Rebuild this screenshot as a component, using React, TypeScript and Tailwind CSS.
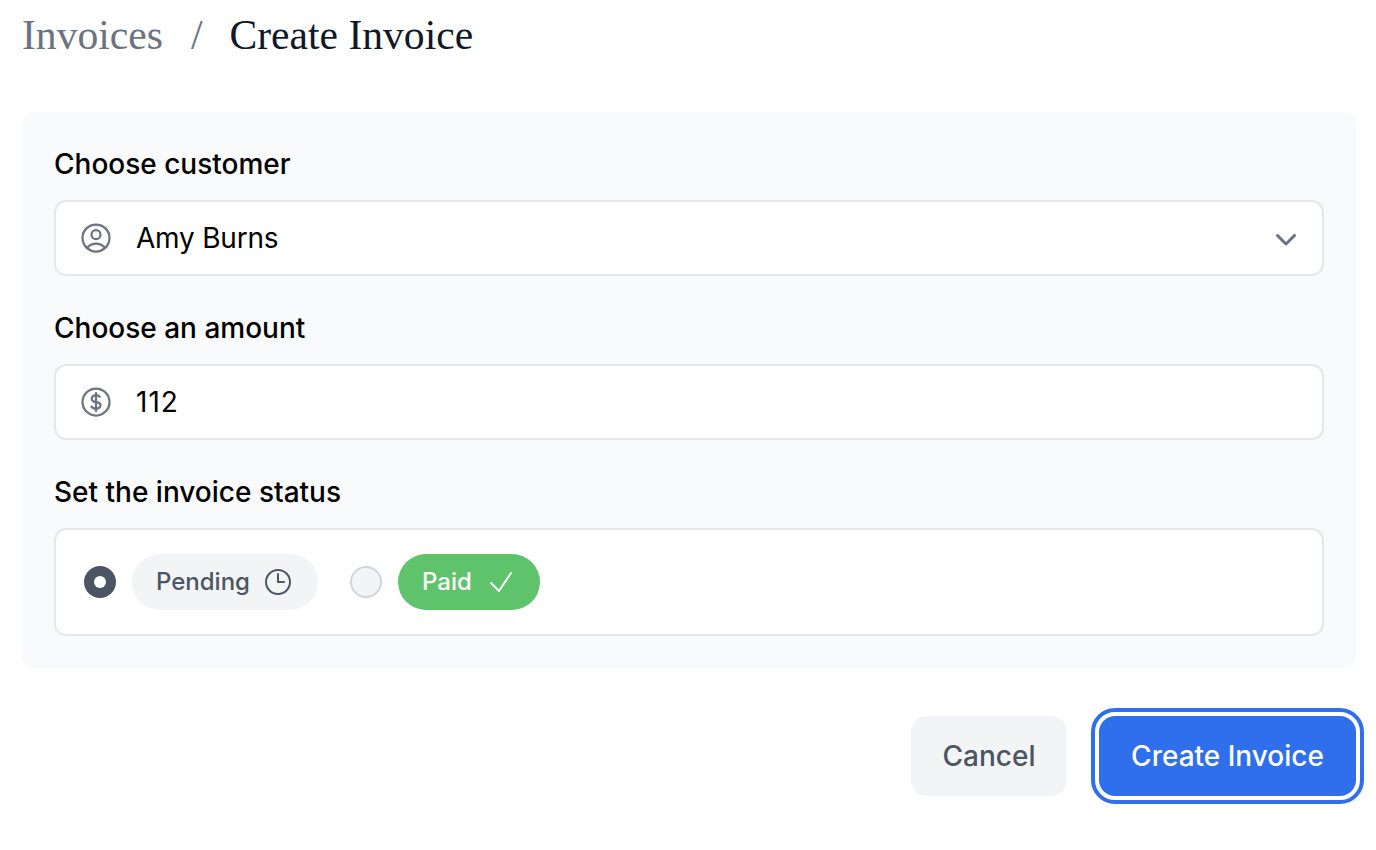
import { HiMiniChevronDown } from "react-icons/hi2";
import { HiOutlineUserCircle, HiOutlineCurrencyDollar, HiOutlineClock, HiOutlineCheck } from "react-icons/hi2";

function Label({ children }: { children: React.ReactNode }) {
  return <div className="mb-4 h-10 text-[28px] leading-10 font-medium text-black">{children}</div>;
}

export default function App() {
  return (
    <div className="min-h-[850px] w-[1376px] bg-white font-['Inter',sans-serif]">
      <div className="pl-[22px] pr-5">
        <h1 className="flex h-[112px] items-start pt-[8px] font-['Liberation_Serif',serif] text-[41.6px] leading-[54px]">
          <span className="text-[#6b7280]">Invoices</span>
          <span className="ml-[28px] text-[#6b7280]">/</span>
          <span className="ml-[27px] text-[#111827]">Create Invoice</span>
        </h1>
        <div className="rounded-xl bg-[#f9fafb] p-8">
          <Label>Choose customer</Label>
          <div className="mb-8 flex h-[76px] items-center rounded-xl border-2 border-[#e5e7eb] bg-white pl-[22px] pr-4">
            <HiOutlineUserCircle className="h-9 w-9 text-[#6b7280]" />
            <span className="ml-[22px] flex-1 text-[28px] tracking-[-0.2px] text-black">Amy Burns</span>
            <HiMiniChevronDown className="h-10 w-10 text-[#6b7280]" />
          </div>
          <Label>Choose an amount</Label>
          <div className="mb-8 flex h-[76px] items-center rounded-xl border-2 border-[#e5e7eb] bg-white pl-[22px] pr-4">
            <HiOutlineCurrencyDollar className="h-9 w-9 text-[#6b7280]" />
            <span className="ml-[22px] text-[28px] tracking-[1px] text-black">112</span>
          </div>
          <Label>Set the invoice status</Label>
          <div className="flex h-[108px] items-center rounded-xl border-2 border-[#e5e7eb] bg-white pl-[28px]">
            <div className="flex h-8 w-8 items-center justify-center rounded-full bg-[#4b5563]">
              <div className="h-3 w-3 rounded-full bg-white" />
            </div>
            <div className="ml-4 flex h-14 w-[186px] items-center rounded-full bg-[#f3f4f6] pl-6 text-[24px] font-medium text-[#4b5563]">
              Pending
              <HiOutlineClock className="ml-3 h-8 w-8 text-[#4b5563]" />
            </div>
            <div className="ml-8 h-8 w-8 rounded-full border-2 border-[#d1d5db] bg-[#f3f4f6]" />
            <div className="ml-4 flex h-14 w-[142px] items-center rounded-full bg-[#5fc36b] pl-6 text-[24px] font-medium text-white">
              Paid
              <HiOutlineCheck className="ml-[13px] h-8 w-8 text-white" />
            </div>
          </div>
        </div>
        <div className="mt-12 flex justify-end gap-8">
          <button className="h-20 w-[156px] rounded-2xl bg-[#f3f4f6] text-[28px] font-medium text-[#4b5563]">Cancel</button>
          <button className="h-20 w-[257px] rounded-2xl bg-[#2f6feb] text-[28px] font-medium text-white outline-4 outline-offset-4 outline-[#2f6feb]">Create Invoice</button>
        </div>
      </div>
    </div>
  );
}
